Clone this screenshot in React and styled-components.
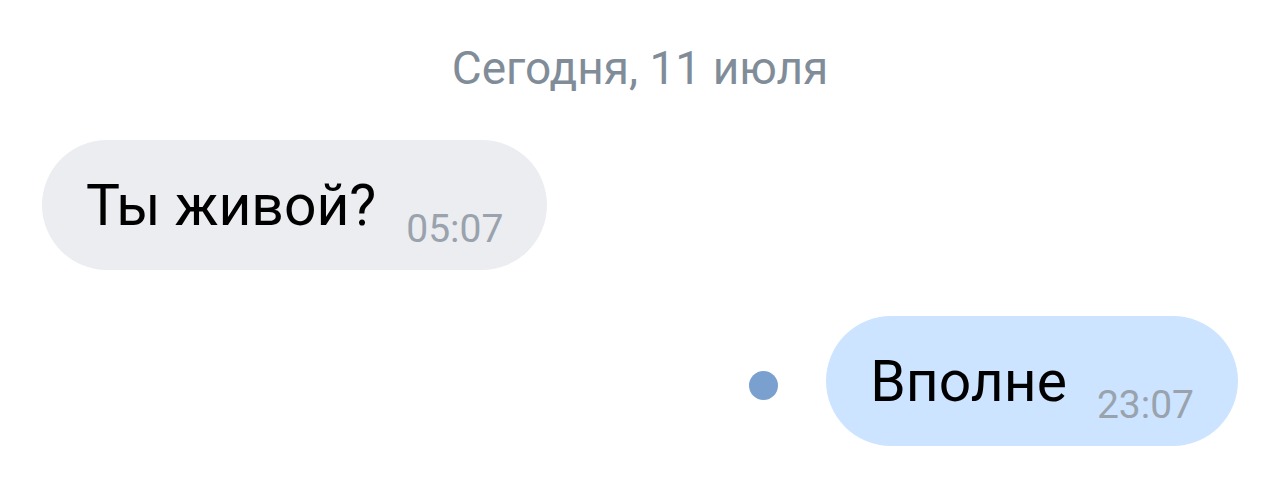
import React from "react";
import styled, { createGlobalStyle } from "styled-components";

const GlobalStyle = createGlobalStyle`
  html, body {
    margin: 0;
    padding: 0;
    background: #ffffff;
  }
  body {
    font-family: Roboto, "Noto Sans", Arial, sans-serif;
  }
`;

function App() {
  return (
    <>
      <GlobalStyle />
      <Chat>
        <DateLabel>Сегодня, 11 июля</DateLabel>
        <Row>
          <Bubble>
            <Text>Ты живой?</Text>
            <Time>05:07</Time>
          </Bubble>
        </Row>
        <Row $out>
          <UnreadDot />
          <Bubble $out>
            <Text>Вполне</Text>
            <Time>23:07</Time>
          </Bubble>
        </Row>
      </Chat>
    </>
  );
}

export default App;

const Chat = styled.div`
  display: flex;
  flex-direction: column;
  padding: 45px 42px 0;
  height: 496px;
  box-sizing: border-box;
`;

const DateLabel = styled.div`
  text-align: center;
  font-size: 46px;
  line-height: 1;
  color: #818c99;
  margin-bottom: 49px;
`;

const Row = styled.div`
  display: flex;
  align-items: center;
  justify-content: ${(p) => (p.$out ? "flex-end" : "flex-start")};
  gap: 48px;
  margin-bottom: 46px;
`;

const Bubble = styled.div`
  display: flex;
  align-items: flex-end;
  gap: 30px;
  height: 130px;
  box-sizing: border-box;
  padding: 0 44px 21px 44px;
  border-radius: 65px;
  background: ${(p) => (p.$out ? "#cce4ff" : "#ebedf0")};
`;

const Text = styled.span`
  font-size: 57px;
  line-height: 1;
  color: #000000;
  margin-bottom: 15px;
`;

const Time = styled.span`
  font-size: 39px;
  line-height: 1;
  color: #99a2ad;
`;

const UnreadDot = styled.span`
  width: 29px;
  height: 29px;
  border-radius: 50%;
  background: #7aa0cf;
  margin-top: 8px;
`;
